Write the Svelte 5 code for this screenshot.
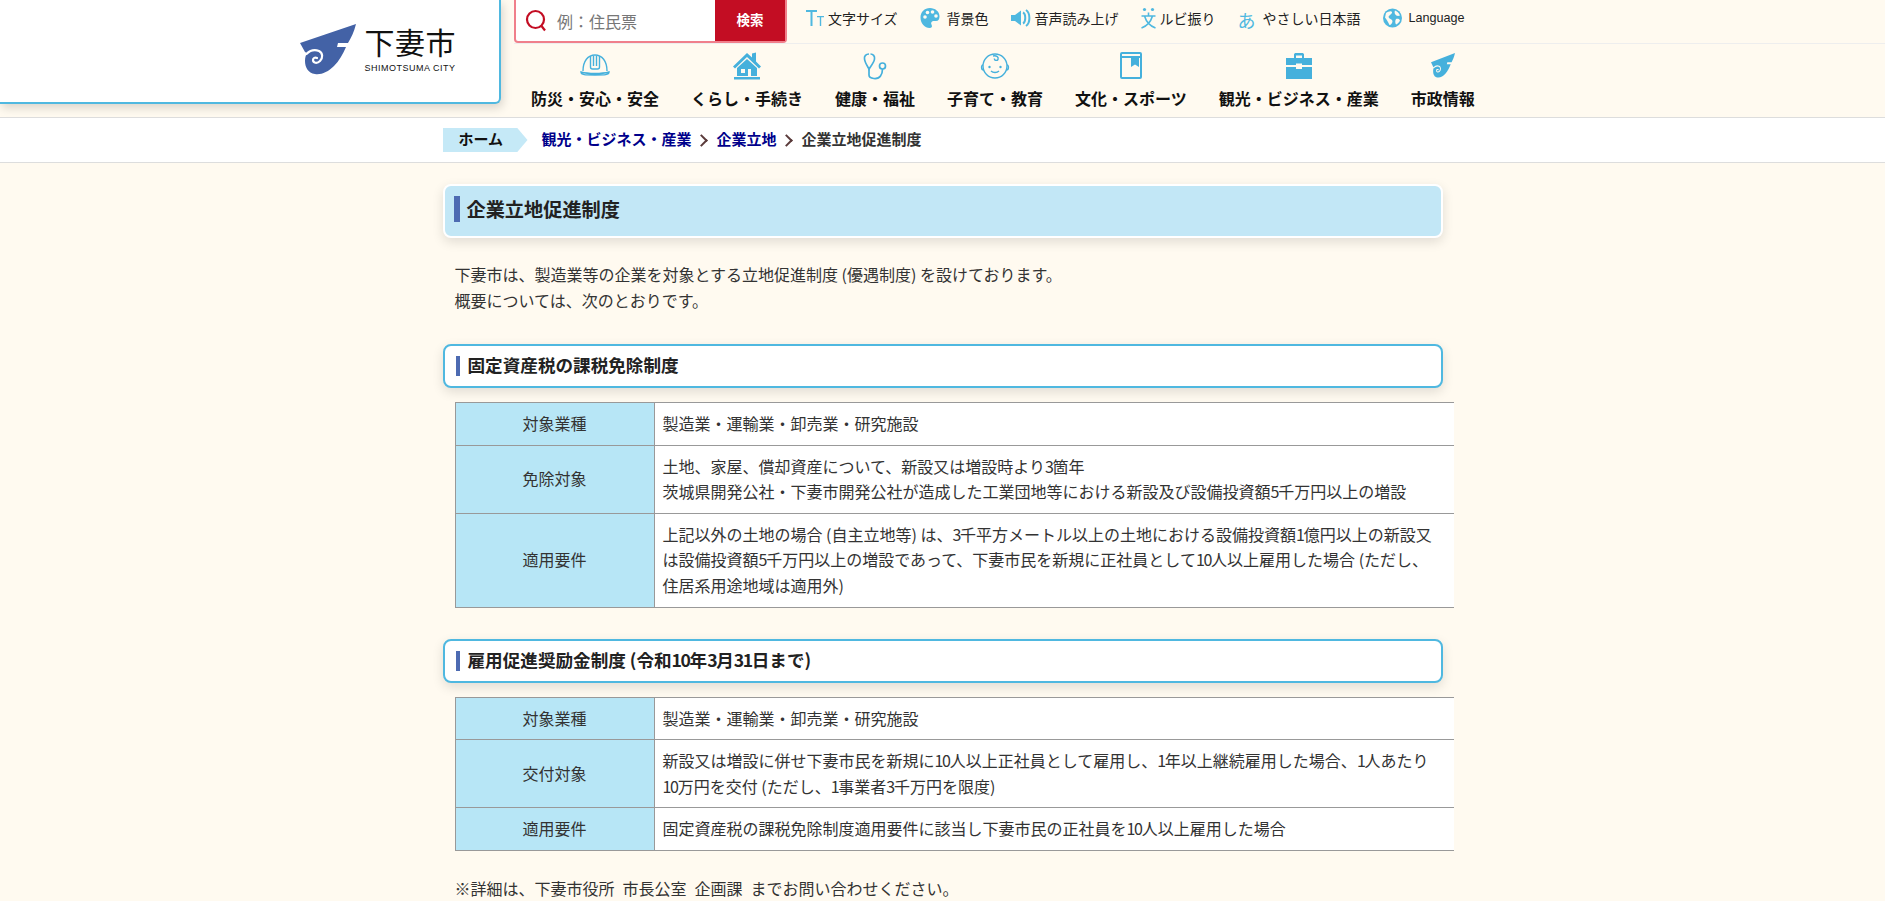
<script>
	const navItems = [
		{ label: '防災・安心・安全', icon: 'helmet' },
		{ label: 'くらし・手続き', icon: 'house' },
		{ label: '健康・福祉', icon: 'stetho' },
		{ label: '子育て・教育', icon: 'baby' },
		{ label: '文化・スポーツ', icon: 'book' },
		{ label: '観光・ビジネス・産業', icon: 'case' },
		{ label: '市政情報', icon: 'city' }
	];

	const tableOne = [
		{ head: '対象業種', lines: ['製造業・運輸業・卸売業・研究施設'] },
		{
			head: '免除対象',
			lines: [
				'土地、家屋、償却資産について、新設又は増設時より3箇年',
				'茨城県開発公社・下妻市開発公社が造成した工業団地等における新設及び設備投資額5千万円以上の増設'
			]
		},
		{
			head: '適用要件',
			lines: [
				'上記以外の土地の場合(自主立地等)は、3千平方メートル以上の土地における設備投資額1億円以上の新設又',
				'は設備投資額5千万円以上の増設であって、下妻市民を新規に正社員として10人以上雇用した場合(ただし、',
				'住居系用途地域は適用外)'
			]
		}
	];

	const tableTwo = [
		{ head: '対象業種', lines: ['製造業・運輸業・卸売業・研究施設'] },
		{
			head: '交付対象',
			lines: [
				'新設又は増設に併せ下妻市民を新規に10人以上正社員として雇用し、1年以上継続雇用した場合、1人あたり',
				'10万円を交付(ただし、1事業者3千万円を限度)'
			]
		},
		{
			head: '適用要件',
			lines: ['固定資産税の課税免除制度適用要件に該当し下妻市民の正社員を10人以上雇用した場合']
		}
	];

	const sections = [
		{ title: '固定資産税の課税免除制度', rows: tableOne },
		{ title: '雇用促進奨励金制度(令和10年3月31日まで)', rows: tableTwo }
	];

	// digits run narrow and parens wide in the original font
	const tokens = (text) => text.split(/(\d+|[()])/).filter(Boolean);
</script>

{#snippet jp(text)}
	{#each tokens(text) as t}{#if /\d/.test(t)}<span class="num">{t}</span>{:else if t === '('}<span class="paren-open">{t}</span>{:else if t === ')'}<span class="paren-close">{t}</span>{:else}{t}{/if}{/each}
{/snippet}

{#snippet mark(body, cut)}
	<path fill={body} d="M0 19L56 0C54 8 51 14 48 19L38 19L37 23L46 23C43 30 39 37 34 42C28 48 21 51 15 50C8 49 5 43 5 37C5 33 6 31 7 29L5 28Z" />
	<path fill="none" stroke={cut} stroke-width="2.200" stroke-linecap="round" d="M6.500 30C10 26.500 15 25.500 19 27C23 29 23 34 20 37C17 40 13 39 13 36C13 34 15 33 17 34" />
{/snippet}

{#snippet navIcon(name)}
	<svg class="nav-icon" width="34" height="32" viewBox="0 0 34 32" aria-hidden="true">
		{#if name === 'helmet'}
			<g fill="none" stroke="#45b0dc" stroke-width="1.400">
				<path d="M5 22C5 12 10 6 17 6C24 6 29 12 29 22" />
				<path d="M12.500 7V18C12.500 19 13.500 20 14.500 20H19.500C20.500 20 21.500 19 21.500 18V7" />
				<path d="M15.500 7V17M18.500 7V17" />
				<path d="M3 23C10 25 24 25 31 23C31 26 27 26 17 26C7 26 3 26 3 23Z" />
			</g>
		{:else if name === 'house'}
			<g fill="#45b0dc">
				<path d="M17 4L22 8.500V4.500L26 3.500V12.500L31 17.500L29 19.500L17 8L5 19.500L3 17.500Z" />
				<path d="M7 19L17 10L27 19V27H21V20H18V27H7ZM11 20V24H15V20Z" fill-rule="evenodd" />
				<rect x="4" y="28" width="26" height="2.500" />
			</g>
		{:else if name === 'stetho'}
			<g fill="none" stroke="#45b0dc" stroke-width="1.700">
				<path d="M11 5C8 5 6 7 6.500 10C7 14 10 18 11 20C12 18 16 14 16.500 10C17 7 15 5 12.500 5" />
				<path d="M11 20V26C11 30 20 31 22.500 27C24 25 24.500 23 24.500 20" />
				<circle cx="24.500" cy="17" r="3" />
			</g>
		{:else if name === 'baby'}
			<g fill="none" stroke="#45b0dc" stroke-width="1.400">
				<circle cx="17" cy="17" r="12" />
				<path d="M5 16C3 16 3 21 5.500 21M29 16C31 16 31 21 28.500 21" />
				<path d="M15 7C18 6 21 8 20 10.500C19 12 16 11.500 16.500 9.500" />
				<path d="M13 22C15 24 19 24 21 22" />
			</g>
			<circle cx="11.500" cy="18" r="1.200" fill="#45b0dc" />
			<circle cx="22.500" cy="18" r="1.200" fill="#45b0dc" />
		{:else if name === 'book'}
			<g fill="none" stroke="#45b0dc" stroke-width="2">
				<rect x="7" y="4" width="20" height="25" rx="1" />
				<path d="M7 8H27" />
			</g>
			<path d="M17 8H25V18L21 15.500L17 18Z" fill="#45b0dc" />
		{:else if name === 'case'}
			<g fill="#45b0dc">
				<path d="M12 9V5.500C12 4.500 13 4 14 4H20C21 4 22 4.500 22 5.500V9H20V6.500H14V9Z" />
				<path d="M4 9H30V16H20V14.500H14V16H4Z" />
				<path d="M4 18H14V20H20V18H30V30H4Z" />
			</g>
		{:else}
			<svg x="5" y="4" width="24" height="25" viewBox="0 0 56 51" preserveAspectRatio="none">
				{@render mark('#45b0dc', '#fffaf0')}
			</svg>
		{/if}
	</svg>
{/snippet}

<div class="page">
	<header class="site-header">
		<div class="logo-box">
			<a class="logo" href="#top">
				<svg class="logo-mark" width="56" height="51" viewBox="0 0 56 51" aria-hidden="true">
					{@render mark('#4362a6', '#fff')}
				</svg>
				<span class="logo-text">
					<span class="logo-name">下妻市</span>
					<span class="logo-en">SHIMOTSUMA CITY</span>
				</span>
			</a>
		</div>

		<div class="header-right">
			<div class="tools">
				<form class="search" onsubmit={(e) => e.preventDefault()}>
					<svg width="24" height="24" viewBox="0 0 24 24" fill="none" stroke="#c30d23" stroke-width="2.200" aria-hidden="true">
						<circle cx="10.500" cy="10.500" r="8.500" />
						<path d="M16.500 17L20 21.500" />
					</svg>
					<span class="search-hint">例：住民票</span>
					<button type="submit">検索</button>
				</form>

				<ul class="tool-list">
					<li>
						<svg width="22" height="20" viewBox="0 0 22 20" fill="#4fb8e0" aria-hidden="true">
							<path d="M0 2H11V4H6.500V18H4.500V4H0Z" />
							<path d="M11 8H18V9.300H15.200V18H13.800V9.300H11Z" />
						</svg>
						文字サイズ
					</li>
					<li>
						<svg width="27" height="22" viewBox="0 0 27 22" aria-hidden="true">
							<path d="M10 1C4.500 1 0.500 5 0.500 10.500C0.500 16.500 5 21 9.500 21C12 21 12.500 19.500 11.500 17.500C10.500 15.500 12 14 14 14H16C18.500 14 19.500 12 19.500 9.500C19.500 4.500 15 1 10 1Z" fill="#4fb8e0" />
							<circle cx="5" cy="10" r="1.800" fill="#fffaf0" />
							<circle cx="7.500" cy="5.500" r="1.800" fill="#fffaf0" />
							<circle cx="12.500" cy="5" r="1.800" fill="#fffaf0" />
							<circle cx="16" cy="9" r="1.800" fill="#fffaf0" />
						</svg>
						背景色
					</li>
					<li>
						<svg width="24" height="20" viewBox="0 0 24 20" aria-hidden="true">
							<path d="M0 7H4L10 2.500V17.500L4 13H0Z" fill="#4fb8e0" />
							<path d="M12 4.500C15 6 15 14 12 15.500M15 2C19.500 5 19.500 15 15 18" fill="none" stroke="#4fb8e0" stroke-width="2" />
						</svg>
						音声読み上げ
					</li>
					<li>
						<svg width="19" height="22" viewBox="0 0 19 22" fill="none" stroke="#4fb8e0" stroke-width="1.600" aria-hidden="true">
							<circle cx="3.500" cy="2.500" r="1.600" fill="#4fb8e0" stroke="none" />
							<circle cx="11.500" cy="2.500" r="1.600" fill="#4fb8e0" stroke="none" />
							<path d="M0.500 9H14.500M7.500 5.500V9M3.500 9C5 14 9 19 14.500 21M11.500 9C10 14 6 19 0.500 21" />
						</svg>
						ルビ振り
					</li>
					<li>
						<span class="a-glyph">あ</span>
						やさしい日本語
					</li>
					<li class="lang">
						<svg width="26" height="20" viewBox="0 0 26 20" aria-hidden="true">
							<circle cx="9.500" cy="10" r="9.500" fill="#4fb8e0" />
							<path d="M3 5C5 4 8 2.500 9 4C9.500 6 6 7 5.500 9C6 11 9 11 9.500 13C9.500 15 8 17 6.500 17C5 14 3.500 11 2 9.500ZM12 2.500C14 3 16 5 17 7.500C15 8.500 13 8 12 6C11.500 5 11.500 3.500 12 2.500ZM13 11C15 10.500 16.500 11 17 12.500C16 14.500 14.500 16 13 16.500C12 15 12 12.500 13 11Z" fill="#fffaf0" />
						</svg>
						Language
					</li>
				</ul>
			</div>

			<nav class="main-nav">
				{#each navItems as item}
					<a href="#top">
						{@render navIcon(item.icon)}
						<span>{item.label}</span>
					</a>
				{/each}
			</nav>
		</div>
	</header>

	<div class="crumbs">
		<div class="crumbs-inner">
			<a class="home" href="#top">ホーム</a>
			<a class="crumb-link" href="#top">観光・ビジネス・産業</a>
			<i class="chev"></i>
			<a class="crumb-link" href="#top">企業立地</a>
			<i class="chev"></i>
			<span>企業立地促進制度</span>
		</div>
	</div>

	<main class="content">
		<h1>企業立地促進制度</h1>
		<p class="lead">
			{@render jp('下妻市は、製造業等の企業を対象とする立地促進制度(優遇制度)を設けております。')}<br />
			概要については、次のとおりです。
		</p>

		{#each sections as section}
			<h2>{@render jp(section.title)}</h2>
			<table>
				<tbody>
					{#each section.rows as row}
						<tr>
							<th>{row.head}</th>
							<td>
								{#each row.lines as line}
									<div>{@render jp(line)}</div>
								{/each}
							</td>
						</tr>
					{/each}
				</tbody>
			</table>
		{/each}

		<p class="note">※詳細は、下妻市役所&ensp;市長公室&ensp;企画課&ensp;までお問い合わせください。</p>
	</main>
</div>

<style>
	:global(body) {
		background: #fffaf0;
		color: #333;
		font-family: "Noto Sans CJK JP", "Noto Sans", sans-serif;
		font-size: 16px;
	}

	a {
		color: inherit;
		text-decoration: none;
	}

	.page {
		height: 100vh;
		overflow: hidden;
	}

	.num {
		letter-spacing: -0.08em;
	}

	.paren-open {
		margin-left: 0.22em;
	}

	.paren-close {
		margin-right: 0.22em;
	}

	.site-header {
		display: flex;
		height: 117px;
		border-bottom: 1px solid #ddd;
	}

	.logo-box {
		display: flex;
		justify-content: flex-end;
		box-sizing: border-box;
		width: 501px;
		height: 104px;
		background: #fff;
		border: 2px solid #4fb8e0;
		border-top: 0;
		border-left: 0;
		border-bottom-right-radius: 6px;
		box-shadow: 2px 4px 10px rgba(0, 0, 0, 0.15);
	}

	.logo {
		display: flex;
		gap: 9px;
		padding: 24px 43px 0 0;
	}

	.logo-text {
		display: flex;
		flex-direction: column;
		color: #111;
	}

	.logo-name {
		font-size: 30px;
		line-height: 36px;
		letter-spacing: 0.5px;
		margin-top: -1px;
	}

	.logo-en {
		font-family: "Liberation Sans", sans-serif;
		font-size: 9px;
		line-height: 12px;
		letter-spacing: 0.500px;
		margin-top: 3px;
		white-space: nowrap;
	}

	.header-right {
		flex: 1;
		margin-left: 13px;
	}

	.tools {
		display: flex;
		align-items: flex-start;
		height: 43px;
		border-bottom: 1px solid #eee;
	}

	.search {
		display: flex;
		align-items: center;
		box-sizing: border-box;
		width: 273px;
		height: 43px;
		background: #fff;
		border: 2px solid #f07f8b;
		border-top: 0;
		border-radius: 0 0 4px 4px;
		padding-left: 9px;
	}

	.search-hint {
		flex: 1;
		margin-left: 8px;
		color: #777;
		font-size: 16px;
	}

	.search button {
		align-self: stretch;
		width: 70px;
		padding: 0 0 3px;
		border: 0;
		background: #c30d23;
		color: #fff;
		font: bold 13.500px "Noto Sans CJK JP", sans-serif;
	}

	.tool-list {
		display: flex;
		gap: 22px;
		margin: 0 0 0 19px;
		padding: 0;
		list-style: none;
		font-size: 14px;
		color: #222;
	}

	.tool-list li {
		display: flex;
		align-items: center;
		height: 36px;
		white-space: nowrap;
	}

	.a-glyph {
		width: 25px;
		font-size: 18px;
		color: #4fb8e0;
		margin-top: 4px;
	}

	.lang {
		font-family: "Liberation Sans", sans-serif;
		font-size: 12.600px;
	}

	.main-nav {
		display: flex;
		padding-left: 1px;
	}

	.main-nav a {
		display: flex;
		flex-direction: column;
		align-items: center;
		padding: 5px 16px 0;
		font-weight: 700;
		color: #111;
		white-space: nowrap;
	}

	.main-nav span {
		line-height: 24px;
		margin-top: 5px;
	}

	.nav-icon {
		display: block;
	}

	.crumbs {
		height: 44px;
		background: #fff;
		border-bottom: 1px solid #ddd;
	}

	.crumbs-inner {
		display: flex;
		align-items: center;
		width: 1000px;
		height: 100%;
		margin: 0 auto;
		font-size: 15px;
		font-weight: 700;
		color: #333;
	}

	.crumbs-inner > a:not(.home),
	.crumbs-inner > span {
		position: relative;
		top: -2px;
	}

	.home {
		box-sizing: border-box;
		width: 85px;
		height: 24px;
		margin-right: 14px;
		padding-left: 16px;
		background: #c5e9f7;
		color: #111;
		line-height: 22px;
		clip-path: polygon(0 0, 88% 0, 100% 50%, 88% 100%, 0 100%);
	}

	.crumb-link {
		color: #00008b;
	}

	.chev {
		width: 7px;
		height: 7px;
		margin: 0 11px 0 5px;
		border-top: 2px solid #5a3a3a;
		border-right: 2px solid #5a3a3a;
		transform: rotate(45deg);
	}

	.content {
		width: 1000px;
		margin: 0 auto;
		line-height: 26px;
	}

	h1 {
		position: relative;
		box-sizing: border-box;
		height: 54px;
		margin: 21px 0 0;
		padding-left: 22px;
		background: #c2e7f6;
		border: 2px solid #fff;
		border-radius: 8px;
		box-shadow: 0 4px 12px rgba(0, 0, 0, 0.12);
		color: #222;
		font-size: 19.200px;
		font-weight: 700;
		line-height: 47px;
	}

	h1::before {
		content: '';
		position: absolute;
		left: 9px;
		top: 10px;
		width: 6px;
		height: 26px;
		background: #4d6bb2;
	}

	.lead {
		margin: 23px 0 0 12px;
	}

	h2 {
		position: relative;
		box-sizing: border-box;
		height: 44px;
		margin: 31px 0 0;
		padding-left: 23px;
		background: #fff;
		border: 2px solid #4fb8e0;
		border-radius: 8px;
		box-shadow: 0 4px 12px rgba(0, 0, 0, 0.12);
		color: #222;
		font-size: 17.600px;
		font-weight: 700;
		line-height: 37px;
	}

	h2::before {
		content: '';
		position: absolute;
		left: 11px;
		top: 10px;
		width: 4px;
		height: 20px;
		background: #4d6bb2;
	}

	table {
		width: 999px;
		margin: 14px 0 0 12px;
		border-collapse: collapse;
		background: #fff;
		line-height: 25.600px;
	}

	th,
	td {
		padding: 8px;
		border-top: 1px solid #999;
		border-bottom: 1px solid #999;
		font-weight: 400;
		text-align: left;
	}

	th {
		box-sizing: border-box;
		width: 199px;
		background: #b7e6f6;
		border-left: 1px solid #999;
		border-right: 1px solid #999;
		text-align: center;
	}

	.note {
		margin: 24px 0 0 12px;
	}
</style>
